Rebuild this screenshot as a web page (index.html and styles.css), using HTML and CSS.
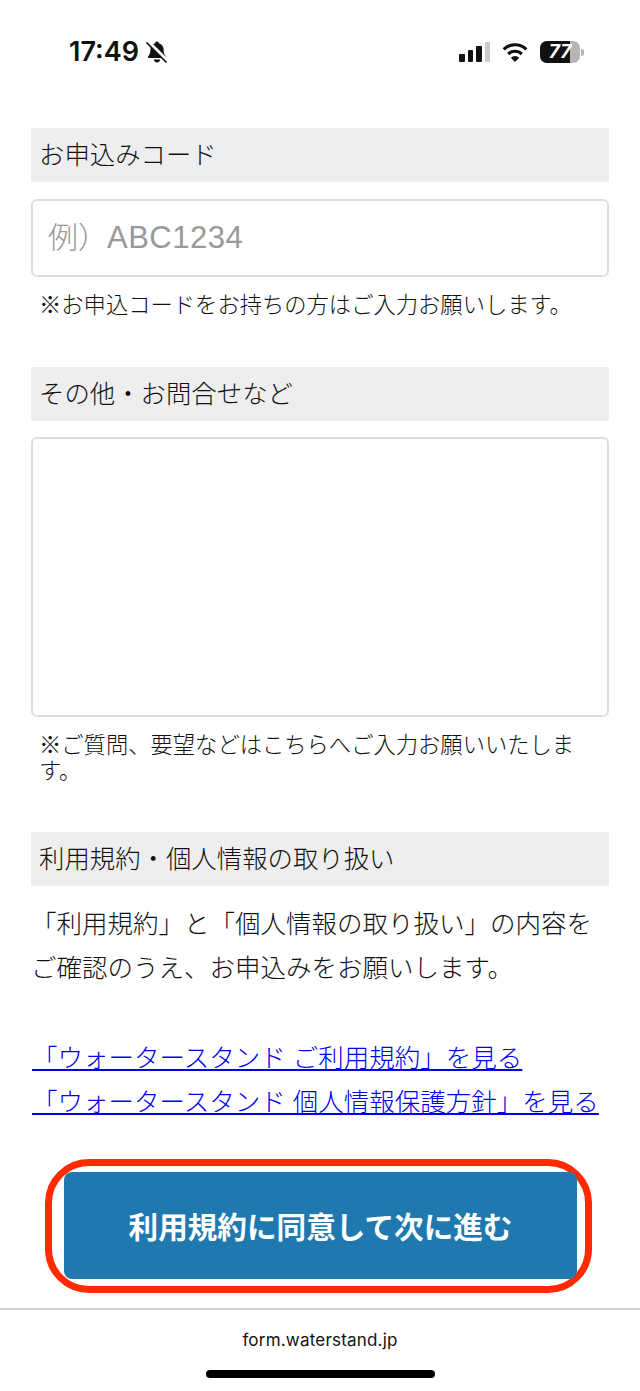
FILE: index.html
```html
<!DOCTYPE html>
<html lang="ja">
<head>
<meta charset="utf-8">
<title>お申込み</title>
<link rel="stylesheet" href="styles.css">
</head>
<body>
<div class="page">
  <header class="status">
    <div class="status-left">
      <span class="time">17:49</span>
      <svg class="bell" viewBox="0 0 24 24" width="24" height="24">
        <path d="M12 1.500c1 0 1.800.7 1.900 1.700 3 .8 4.700 3.300 4.700 6.500 0 3.600.8 5 2.200 6.500.5.600.2 1.700-.7 1.700H3.900c-.9 0-1.200-1.100-.7-1.700 1.400-1.500 2.200-2.900 2.200-6.500 0-3.200 1.700-5.700 4.700-6.500.1-1 .9-1.700 1.900-1.700z" fill="#111"/>
        <path d="M8.800 19.500h6.400c-.2 1.700-1.500 2.900-3.200 2.900s-3-1.200-3.200-2.900z" fill="#111"/>
        <path d="M3 1.500l20 20" stroke="#fff" stroke-width="3.400"/>
        <path d="M1.500 2.500l20 20" stroke="#111" stroke-width="1.700"/>
      </svg>
    </div>
    <div class="status-right">
      <div class="signal">
        <i class="bar b1"></i><i class="bar b2"></i><i class="bar b3"></i><i class="bar b4"></i>
      </div>
      <svg class="wifi" viewBox="0 0 26 20" width="26" height="20">
        <path d="M1.700 7.300A16.300 16.300 0 0 1 24.300 7.300" fill="none" stroke="#111" stroke-width="3.200"/>
        <path d="M6.200 12A9.800 9.800 0 0 1 19.800 12" fill="none" stroke="#111" stroke-width="3.200"/>
        <path d="M13 20L8.800 15.700A6 6 0 0 1 17.200 15.700Z" fill="#111"/>
      </svg>
      <div class="battery">
        <div class="battery-body"><span class="battery-fill"></span><span class="battery-num">77</span></div>
        <span class="battery-cap"></span>
      </div>
    </div>
  </header>

  <main class="form">
    <section class="field field-code">
      <h2 class="label">お申込みコード</h2>
      <div class="input code"><span class="placeholder">例）<span class="latin">ABC1234</span></span></div>
      <p class="note note-one">※お申込コードをお持ちの方はご入力お願いします。</p>
    </section>

    <section class="field field-other">
      <h2 class="label">その他・お問合せなど</h2>
      <div class="input textarea"></div>
      <p class="note">※ご質問、要望などはこちらへご入力お願いいたします。</p>
    </section>

    <section class="field terms">
      <h2 class="label">利用規約・個人情報の取り扱い</h2>
      <p class="lead">「利用規約」と「個人情報の取り扱い」の内容をご確認のうえ、お申込みをお願いします。</p>
      <ul class="links">
        <li><a href="#">「ウォータースタンド ご利用規約」を見る</a></li>
        <li><a href="#">「ウォータースタンド 個人情報保護方針」を見る</a></li>
      </ul>
    </section>

    <div class="highlight">
      <button class="submit" type="button">利用規約に同意して次に進む</button>
    </div>
  </main>

  <footer class="address">
    <span class="url">form.waterstand.jp</span>
    <span class="home"></span>
  </footer>
</div>
</body>
</html>
```
FILE: styles.css
```css
* { box-sizing: border-box; }
html, body { margin: 0; padding: 0; background: #fff; }
body {
  font-family: "Liberation Sans", "Noto Sans CJK JP", sans-serif;
  font-weight: 300;
  color: #111;
}
.page {
  width: 640px;
  height: 1391px;
  display: flex;
  flex-direction: column;
  overflow: hidden;
}
.status {
  height: 128px;
  flex: none;
  display: flex;
  justify-content: space-between;
  align-items: flex-start;
  padding: 36px 56px 0 69px;
}
.status-left { display: flex; align-items: center; gap: 6px; height: 32px; }
.time {
  font-family: Inter, sans-serif;
  font-weight: 600;
  font-size: 27px;
  line-height: 32px;
  color: #111;
}
.status-right { display: flex; align-items: center; gap: 12px; height: 32px; }
.signal { display: flex; align-items: flex-end; gap: 3px; height: 20px; }
.bar { display: block; width: 5.500px; background: #111; border-radius: 1px; }
.b1 { height: 8px; }
.b2 { height: 12px; }
.b3 { height: 16px; }
.b4 { height: 20px; background: #ccc; }
.battery { display: flex; align-items: center; gap: 1px; }
.battery-body {
  position: relative;
  width: 40px;
  height: 22px;
  border-radius: 7px;
  background: #b5b5b5;
  overflow: hidden;
}
.battery-fill { position: absolute; left: 0; top: 0; bottom: 0; width: 30px; background: #111; }
.battery-num {
  position: absolute;
  inset: 0;
  text-align: center;
  font-family: Inter, sans-serif;
  font-weight: 700;
  font-style: italic;
  font-size: 19px;
  line-height: 22px;
  color: #fff;
}
.battery-cap { width: 3px; height: 7px; background: #b5b5b5; border-radius: 0 2px 2px 0; }

.form { flex: 1; padding: 0 31px; }
.field-code { margin-bottom: 48px; }
.field-other { margin-bottom: 47px; }
.label {
  margin: 0;
  height: 54px;
  padding: 0 8px;
  background: #eee;
  font-size: 25.400px;
  font-weight: 300;
  line-height: 54px;
}
.input {
  margin-top: 16px;
  background: #fff;
  border: 2px solid #ddd;
  border-radius: 6px;
}
.code {
  margin-top: 17px;
  height: 78px;
  padding: 0 15px 6px;
  display: flex;
  align-items: center;
}
.placeholder { font-size: 30px; color: #999; }
.latin { font-size: 31px; letter-spacing: 0.500px; margin-left: -1px; }
.textarea { height: 280px; }
.note {
  margin: 16px 0 0;
  padding: 0 8px;
  font-size: 22.300px;
  line-height: 26px;
}
.lead {
  margin: 16px 0 0;
  font-size: 25.500px;
  line-height: 44px;
}
.links {
  list-style: none;
  margin: 46px 0 0;
  padding: 0 0 0 1px;
  font-size: 25.500px;
  line-height: 44px;
}
.links a { color: #0000ee; text-decoration: underline; }
.highlight {
  width: 547px;
  height: 134px;
  margin: 35px 0 0 14px;
  padding: 6px 8px 7px 12px;
  border: 7px solid #ff2a00;
  border-radius: 44px;
}
.submit {
  display: block;
  width: 100%;
  height: 107px;
  border: 0;
  border-radius: 8px;
  background: #2079ae;
  color: #fff;
  font-family: inherit;
  font-size: 29.600px;
  font-weight: 700;
}
.address {
  flex: none;
  height: 83px;
  border-top: 2px solid #d4d4d4;
  display: flex;
  flex-direction: column;
  align-items: center;
}
.url {
  margin-top: 18px;
  font-family: Inter, sans-serif;
  font-weight: 400;
  font-size: 17px;
  line-height: 24px;
  letter-spacing: 0.200px;
  color: #111;
}
.home {
  margin-top: 18px;
  width: 229px;
  height: 8px;
  border-radius: 4px;
  background: #000;
}
```
